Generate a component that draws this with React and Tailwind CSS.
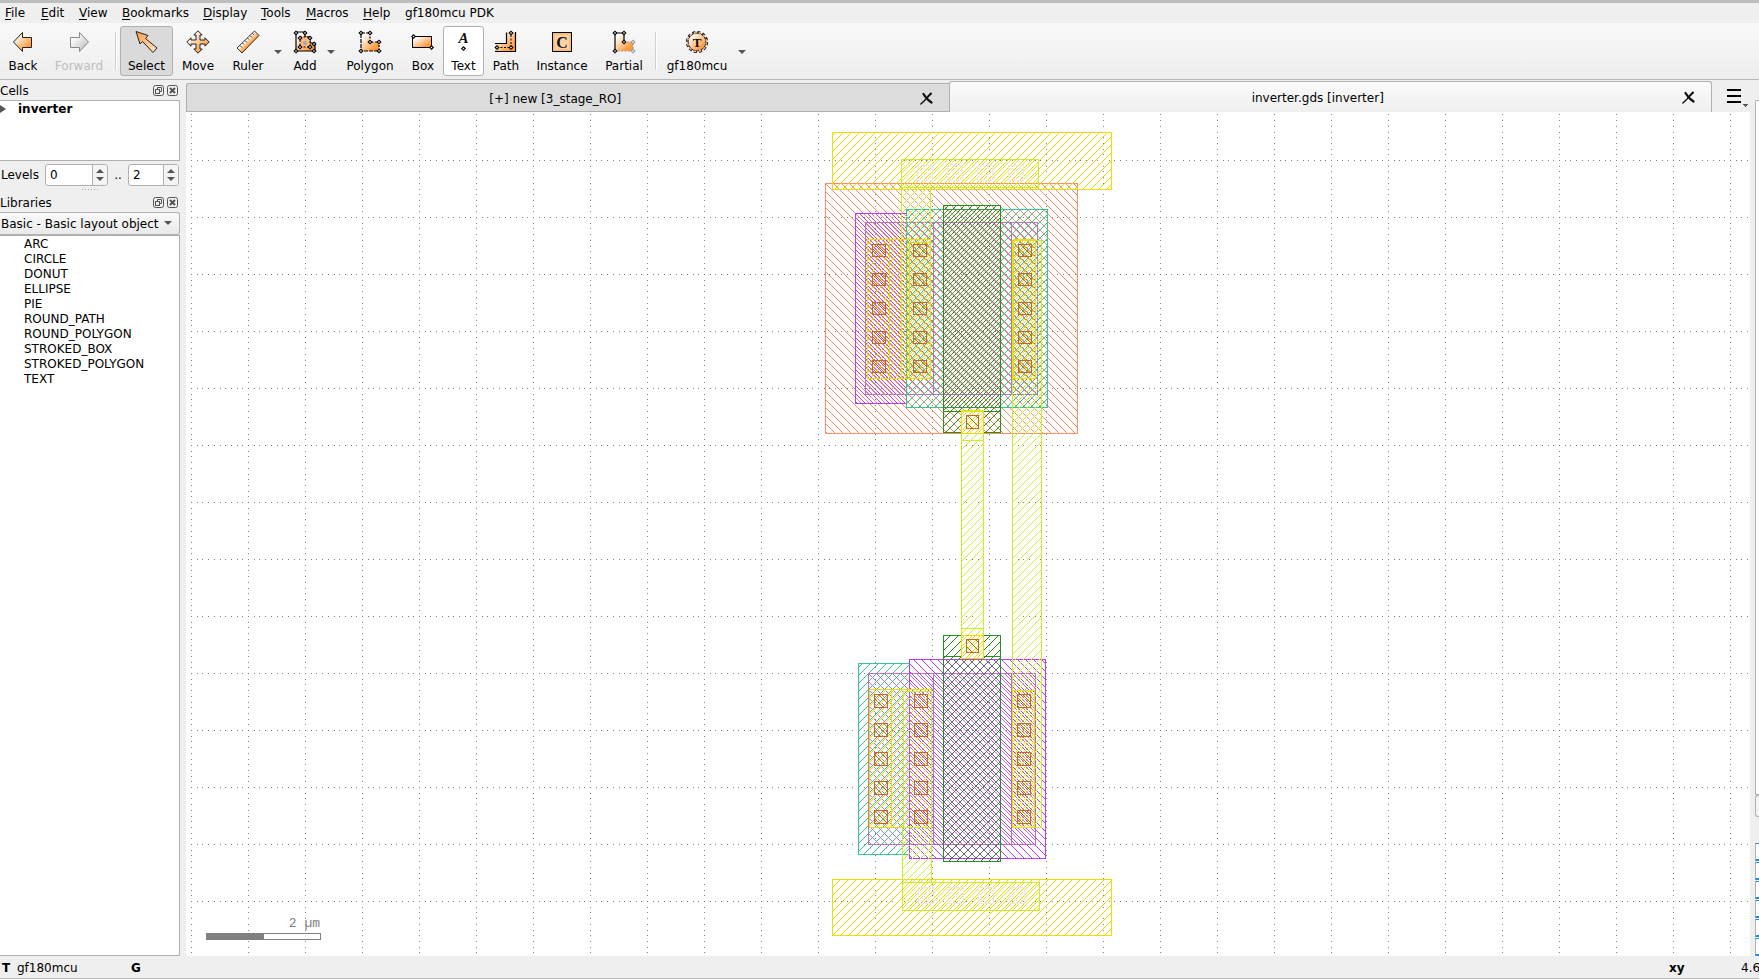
import React from "react";

const MENUS = [
  ["File", "w-9", true],
  ["Edit", "w-[38px]", true],
  ["View", "w-[43px]", true],
  ["Bookmarks", "w-[81px]", true],
  ["Display", "w-[58px]", true],
  ["Tools", "w-[45px]", true],
  ["Macros", "w-[57px]", true],
  ["Help", "w-[42px]", true],
  ["gf180mcu PDK", "w-[100px]", false],
];

const LIBRARY = [
  "ARC",
  "CIRCLE",
  "DONUT",
  "ELLIPSE",
  "PIE",
  "ROUND_PATH",
  "ROUND_POLYGON",
  "STROKED_BOX",
  "STROKED_POLYGON",
  "TEXT",
];

function Handle({ x, y, c = "#000" }) {
  return (
    <path
      d={`M${x} ${y - 2.6}L${x + 2.6} ${y}L${x} ${y + 2.6}L${x - 2.6} ${y}Z`}
      fill={c}
    />
  );
}

function Handles({ points, c = "#000" }) {
  return points.map(([x, y]) => (
    <g key={`${x}-${y}`}>
      <Handle x={x} y={y} c={c} />
      <rect x={x - 0.7} y={y - 0.7} width="1.4" height="1.4" fill="#fff" />
    </g>
  ));
}

const ICONS = {
  back: (
    <path d="M2.5 12L11.5 2.5V7.5H20.5V17.5H11.5V21.5Z" fill="url(#warm)" stroke="#222" />
  ),
  forward: (
    <path d="M21.5 12L12.5 2.5V7.5H3.5V17.5H12.5V21.5Z" fill="url(#cool)" stroke="#888" />
  ),
  select: (
    <path
      d="M1 1.5L13 5.5L10.5 8.5L22 18L18 22.5L7.5 11.5L5 14Z"
      fill="url(#peach)"
      stroke="#222"
    />
  ),
  move: (
    <path
      d="M12 .8L16.2 5H14V10H19V7.8L23.2 12L19 16.2V14H14V19H16.2L12 23.2L7.8 19H10V14H5V16.2L.8 12L5 7.8V10H10V5H7.8Z"
      fill="url(#warm)"
      stroke="#222"
    />
  ),
  ruler: (
    <g>
      <path d="M1 18L18.5 1L23 5.5L6 23Z" fill="url(#ruler)" stroke="#333" />
      <path
        d="M4 15.5l2 2M6.5 13l1.5 1.5M9 10.5l2 2M11.5 8l1.5 1.5M14 5.5l2 2M16.5 3.5l1.5 1.5"
        stroke="#333"
      />
    </g>
  ),
  add: (
    <g>
      <path d="M3 2H12V7H17V13H22V21H3Z" fill="url(#warm)" stroke="#000" strokeWidth="1.2" />
      <path d="M7 7H17V17H7Z" fill="#ffbb7c" stroke="#000" strokeDasharray="2 1.5" />
      <circle cx="12" cy="13" r="2.2" fill="#aaa" />
      <Handles points={[[3, 3], [12, 3], [3, 21], [21, 21], [21, 14], [7, 8], [17, 8], [7, 17], [17, 17]]} />
    </g>
  ),
  polygon: (
    <g>
      <path d="M3 3H12V12H21V21H3Z" fill="url(#warm)" />
      <path d="M12 3V12H21V21" fill="none" stroke="#000" strokeWidth="1.2" strokeDasharray="2 1.5" />
      <path d="M12 3H3V21H21" fill="none" stroke="#000" strokeWidth="1.2" strokeDasharray="4 1" />
      <Handles points={[[3, 3], [12, 3], [12, 12], [21, 12], [21, 21], [3, 21]]} />
    </g>
  ),
  box: (
    <g>
      <rect x="1.5" y="6.5" width="19" height="11" fill="url(#warm)" stroke="#000" />
      <Handles points={[[2.5, 6.5], [20.5, 17.5]]} />
    </g>
  ),
  text: (
    <g>
      <text x="11.5" y="13" textAnchor="middle" fontFamily="Liberation Serif, serif" fontSize="15" fontWeight="bold" fontStyle="italic" fill="#111">A</text>
      <Handles points={[[11.5, 18.5]]} />
    </g>
  ),
  path: (
    <g>
      <path d="M1 13.5H12.5V2.5H21.5V21.5H1Z" fill="url(#warm)" />
      <path d="M1 13.5H12.5V2.5M21.5 2V21.5H1" fill="none" stroke="#000" strokeWidth="1.2" />
      <path d="M3 17.5H17V3" fill="none" stroke="#000" strokeDasharray="2 1.5" />
      <Handles points={[[3, 17.5], [17, 17.5], [17, 3]]} />
    </g>
  ),
  instance: (
    <g>
      <rect x="2.5" y="2.5" width="19" height="19" fill="#ffbb7c" stroke="#000" />
      <rect x="5" y="5" width="14" height="14" fill="#ffd4a8" />
      <text x="12" y="17.5" textAnchor="middle" fontFamily="Liberation Serif, serif" fontSize="16" fontWeight="bold" fill="#111">C</text>
    </g>
  ),
  partial: (
    <g>
      <path d="M3 3H12V12H21V21H3Z" fill="url(#warm)" />
      <path d="M12 11V3H3V21" fill="none" stroke="#000" strokeWidth="1.2" />
      <path d="M12 12H21V21H3" fill="none" stroke="#999" strokeDasharray="2 1.5" />
      <Handles points={[[21, 12], [21, 21]]} c="#999" />
      <Handles points={[[3, 3], [12, 3], [3, 21], [12, 12]]} />
    </g>
  ),
  gear: (
    <g>
      <circle cx="12" cy="12" r="9.6" fill="none" stroke="#222" strokeWidth="3" strokeDasharray="3 2.03" />
      <circle cx="12" cy="12" r="8.9" fill="url(#warm)" stroke="#222" />
      <circle cx="12" cy="12" r="9.4" fill="none" stroke="#ffb877" strokeWidth="1.6" strokeDasharray="2 3.03" strokeDashoffset="-.5" />
      <text x="12" y="16.5" textAnchor="middle" fontFamily="Liberation Serif, serif" fontSize="13" fontWeight="bold" fill="#111">T</text>
    </g>
  ),
};

function Defs() {
  return (
    <svg className="absolute size-0" aria-hidden="true">
      <defs>
        <linearGradient id="warm" x1="0" y1="0" x2="1" y2="1">
          <stop offset=".15" stopColor="#fff" />
          <stop offset=".8" stopColor="#ff9a3c" />
        </linearGradient>
        <linearGradient id="peach" x1="0" y1="0" x2="1" y2="1">
          <stop offset="0" stopColor="#ff9a3c" />
          <stop offset="1" stopColor="#ffe6cf" />
        </linearGradient>
        <linearGradient id="cool" x1="0" y1="0" x2="1" y2="1">
          <stop offset=".2" stopColor="#fff" />
          <stop offset="1" stopColor="#b5b5b5" />
        </linearGradient>
        <linearGradient id="ruler" x1=".3" y1=".3" x2=".7" y2=".7">
          <stop offset=".3" stopColor="#fff" />
          <stop offset=".7" stopColor="#ff9a3c" />
        </linearGradient>
      </defs>
    </svg>
  );
}

function Caret({ className = "" }) {
  return (
    <svg className={`h-1 w-2 ${className}`} viewBox="0 0 8 4" aria-hidden="true">
      <path d="M0 0H8L4 4Z" fill="#555" />
    </svg>
  );
}

function ToolButton({ icon, label, width, look = "border-transparent", disabled }) {
  return (
    <button
      type="button"
      disabled={disabled}
      className={`flex h-[50px] shrink-0 flex-col items-center rounded-[3px] border pt-[3px] whitespace-nowrap disabled:text-[#bebebe] ${width} ${look}`}
    >
      <svg className="size-6 shrink-0" viewBox="0 0 24 24" aria-hidden="true">
        {ICONS[icon]}
      </svg>
      <span className="mt-1 leading-4">{label}</span>
    </button>
  );
}

function MenuArrow({ label, width }) {
  return (
    <button type="button" aria-label={label} className={`flex h-[50px] shrink-0 items-center justify-center pt-[2px] pr-[2px] ${width}`}>
      <Caret />
    </button>
  );
}

function Separator() {
  return (
    <div className="flex w-2 shrink-0 justify-center">
      <div className="h-[38px] w-[2px] border-r border-white bg-[#d0d0d0]" />
    </div>
  );
}

function Toolbar() {
  return (
    <div className="flex h-[57px] shrink-0 items-center border-b border-[#b8b8b8] bg-linear-to-b from-[#f9f9f9] to-[#ededed]">
      <ToolButton icon="back" label="Back" width="w-[46px]" />
      <ToolButton icon="forward" label="Forward" width="w-[66px]" disabled />
      <Separator />
      <ToolButton icon="select" label="Select" width="w-[53px]" look="border-[#b0b0b0] bg-[#dadada]" />
      <ToolButton icon="move" label="Move" width="w-[50px]" />
      <ToolButton icon="ruler" label="Ruler" width="w-[50px]" />
      <MenuArrow label="Ruler types" width="w-[11px]" />
      <ToolButton icon="add" label="Add" width="w-[42px]" />
      <MenuArrow label="Add modes" width="w-[11px]" />
      <ToolButton icon="polygon" label="Polygon" width="w-[66px]" />
      <ToolButton icon="box" label="Box" width="w-10" />
      <ToolButton icon="text" label="Text" width="w-[41px]" look="border-[#b0b0b0] bg-white" />
      <ToolButton icon="path" label="Path" width="w-11" />
      <ToolButton icon="instance" label="Instance" width="w-[68px]" />
      <ToolButton icon="partial" label="Partial" width="w-14" />
      <Separator />
      <ToolButton icon="gear" label="gf180mcu" width="w-[74px]" />
      <MenuArrow label="Technologies" width="w-[18px]" />
    </div>
  );
}

function DockHeader({ title }) {
  return (
    <div className="flex h-5 shrink-0 items-center gap-[3px] pr-[2px]">
      <h2 className="grow pt-[2px] leading-4">{title}</h2>
      <button type="button" aria-label={`Float ${title}`}>
        <svg className="size-[11px]" viewBox="0 0 11 11" fill="none" stroke="#555">
          <rect x=".5" y=".5" width="10" height="10" rx="2" />
          <path d="M4.5 4V2.5H8.5V6.5H7" />
          <rect x="2.5" y="4.5" width="4" height="4" />
        </svg>
      </button>
      <button type="button" aria-label={`Close ${title}`}>
        <svg className="size-[11px]" viewBox="0 0 11 11" fill="none" stroke="#555">
          <rect x=".5" y=".5" width="10" height="10" rx="2" />
          <path d="M3 3L8 8M8 3L3 8" strokeWidth="2" />
        </svg>
      </button>
    </div>
  );
}

function Spin({ label, value, width }) {
  return (
    <div className={`flex h-[22px] overflow-hidden rounded-[3px] border border-[#b0b0b0] bg-white ${width}`}>
      <input aria-label={label} defaultValue={value} className="w-0 min-w-0 grow bg-transparent pl-1 outline-none" />
      <div className="flex w-[15px] flex-col items-center justify-center gap-1 border-l border-[#b0b0b0] bg-[#f4f4f4] pr-px">
        <button type="button" aria-label={`${label} up`} className="flex">
          <Caret className="rotate-180" />
        </button>
        <button type="button" aria-label={`${label} down`} className="flex">
          <Caret />
        </button>
      </div>
    </div>
  );
}

function Sidebar() {
  return (
    <aside className="flex w-[180px] shrink-0 flex-col">
      <DockHeader title="Cells" />
      <div className="flex h-[61px] shrink-0 items-start border border-l-0 border-[#b0b0b0] bg-white">
        <button type="button" aria-label="Expand inverter" className="mt-1">
          <svg className="h-2 w-[6px]" viewBox="0 0 6 8">
            <path d="M0 0L6 4L0 8Z" fill="#555" />
          </svg>
        </button>
        <span className="ml-3 leading-4 font-bold">inverter</span>
      </div>
      <div className="flex h-[26px] shrink-0 items-center pt-px pl-px">
        <span className="w-11">Levels</span>
        <Spin label="Minimum level" value="0" width="w-[63px]" />
        <span className="w-5 text-center">..</span>
        <Spin label="Maximum level" value="2" width="w-[51px]" />
      </div>
      <div className="mx-auto mt-[2px] h-px w-[17px] bg-[repeating-linear-gradient(90deg,#aaa_0_1px,transparent_1px_3px)]" />
      <div className="h-[2px] shrink-0" />
      <DockHeader title="Libraries" />
      <div className="relative h-[23px] shrink-0">
        <select
          aria-label="Library"
          className="block h-full w-full appearance-none rounded-r-[3px] border border-l-0 border-[#b0b0b0] bg-linear-to-b from-[#fafafa] to-[#e9e9e9] pl-px"
        >
          <option>Basic - Basic layout object</option>
        </select>
        <Caret className="pointer-events-none absolute top-[9px] right-2" />
      </div>
      <ul className="grow border border-l-0 border-[#b0b0b0] bg-white pt-px">
        {LIBRARY.map((name) => (
          <li key={name} className="pl-6 leading-[15px]">
            {name}
          </li>
        ))}
      </ul>
    </aside>
  );
}

/* ---- layout view ---- */

const GRID = Array.from({ length: 10 }, (_, i) => Math.round(i * 5.7));

const COLORS = {
  yellow: "#f0dc00",
  lime: "#c8f028",
  orange: "#ff8c64",
  purple: "#b93cff",
  teal: "#32c896",
  pink: "#c070c0",
  green: "#23911e",
  gate: "#3c9650",
  contact: "#c8642d",
  via: "#f4e4f0",
};

// direction of the hatch lines and their phase within the 8 px tile
const HATCH = {
  yellow: ["/", 0],
  lime: ["/", 3],
  orange: ["\\", 2],
  purple: ["\\", 6],
  teal: ["/", 6],
  pink: ["\\", 3],
  green: ["/", 2],
  gate: ["/", 6],
  contact: ["\\", 0],
  via: ["\\", 4],
};

// [layer, left, top, right, bottom]
const SHAPES = [
  ["orange", 825, 183, 1077, 433],
  ["purple", 855, 213, 906, 403],
  ["pink", 865, 222, 1037, 394],
  ["pinkLine", 933, 222, 1011, 394],
  ["teal", 906, 209, 1047, 407],
  ["gate", 943, 209, 1000, 407],
  ["green", 943, 205, 1000, 411],
  ["green", 943, 411, 1000, 432],
  ["teal", 858, 663, 909, 854],
  ["pink", 868, 673, 1035, 844],
  ["pinkLine", 933, 673, 1011, 844],
  ["purple", 909, 659, 1045, 858],
  ["green", 943, 656, 1000, 861],
  ["green", 943, 635, 1000, 656],
  ["yellow", 832, 132, 1111, 189],
  ["yellow", 832, 879, 1111, 935],
  ["clear", 961, 411, 983, 433],
  ["clear", 961, 628, 983, 658],
  ["lime", 901, 159, 1038, 187],
  ["lime", 901, 187, 930, 378],
  ["yellow", 867, 239, 930, 378],
  ["yellowLine", 867, 239, 889, 378],
  ["yellowLine", 909, 242, 930, 378],
  ["yellowLine", 1013, 239, 1035, 378],
  ["lime", 1012, 240, 1041, 827],
  ["yellow", 1012, 240, 1035, 378],
  ["lime", 961, 410, 983, 658],
  ["limeLine", 961, 440, 983, 628],
  ["yellow", 961, 411, 983, 433],
  ["yellow", 961, 635, 983, 658],
  ["yellow", 869, 689, 931, 827],
  ["yellowLine", 869, 689, 891, 827],
  ["limeLine", 903, 691, 931, 827],
  ["yellow", 1012, 690, 1034, 827],
  ["lime", 902, 827, 931, 882],
  ["lime", 902, 882, 1039, 910],
  ["contact", 966, 415, 978, 428],
  ["contact", 966, 639, 978, 652],
];

for (const y of [244, 273, 302, 331, 360]) {
  for (const x of [872, 913, 1018]) SHAPES.push(["contact", x, y, x + 13, y + 12]);
}
for (const y of [694, 723, 752, 781, 810]) {
  for (const x of [874, 914, 1017]) SHAPES.push(["contact", x, y, x + 13, y + 13]);
}
for (const x of [917, 947, 977, 1008]) {
  SHAPES.push(["via", x, 165, x + 15, 180]);
  SHAPES.push(["via", x + 1, 887, x + 16, 903]);
}

function hatchPath([dir, phase]) {
  return Array.from({ length: 8 }, (_, i) => {
    const x = (dir === "/" ? 7 - i + phase : i + phase) % 8;
    return `M${x} ${i}h1v1h-1z`;
  }).join("");
}

function LayoutView() {
  return (
    <svg className="block min-h-0 w-full grow bg-white" shapeRendering="crispEdges" role="img" aria-label="Layout of cell inverter">
      <defs>
        <pattern id="grid" x="5" y="48" width="57" height="57" patternUnits="userSpaceOnUse">
          <path d={GRID.map((p) => `M${p} 0h1v1h-1zM0 ${p}h1v1h-1z`).join("")} fill="#808080" />
        </pattern>
        {Object.keys(COLORS).map((k) => (
          <pattern key={k} id={`hatch-${k}`} width="8" height="8" patternUnits="userSpaceOnUse">
            <path d={hatchPath(HATCH[k])} fill={COLORS[k]} />
          </pattern>
        ))}
      </defs>
      <rect width="100%" height="100%" fill="url(#grid)" />
      <g transform="translate(-186 -112)">
        {SHAPES.map(([layer, l, t, r, b], i) => {
          if (layer === "clear") {
            return <rect key={i} x={l} y={t} width={r - l} height={b - t} fill="#fff" />;
          }
          const outline = layer.endsWith("Line");
          const name = outline ? layer.slice(0, -4) : layer;
          return (
            <rect
              key={i}
              x={l + 0.5}
              y={t + 0.5}
              width={r - l}
              height={b - t}
              fill={outline ? "none" : `url(#hatch-${name})`}
              stroke={COLORS[name]}
            />
          );
        })}
        <rect x="206.5" y="933.5" width="114" height="6" fill="#fff" stroke="#808080" />
        <rect x="206" y="933" width="58" height="7" fill="#808080" />
        <text x="320" y="927" textAnchor="end" fontFamily="Liberation Mono, monospace" fontSize="13" fill="#808080">
          2 µm
        </text>
      </g>
    </svg>
  );
}

function CloseTab({ label }) {
  return (
    <button type="button" aria-label={label} className="mr-4 shrink-0">
      <svg className="size-[13px]" viewBox="0 0 13 13" fill="none" stroke="#111" strokeLinecap="round">
        <path d="M.8 12C4 9.5 7 6 10.8 1.5" strokeWidth="1.3" />
        <path d="M8 4.5L11 1.5" strokeWidth="1.8" />
        <path d="M3.5 2C5 4.5 8 8.5 11.5 10.5" strokeWidth="2.2" />
      </svg>
    </button>
  );
}

function Tabs() {
  return (
    <div className="flex h-8 shrink-0 items-end">
      <div className="flex h-[29px] min-w-0 flex-1 items-center rounded-tl-[3px] border border-r-0 border-[#b0b0b0] bg-[#dcdcdc] pt-[2px]">
        <button type="button" className="grow pl-1 text-center">
          [+] new [3_stage_RO]
        </button>
        <CloseTab label="Close new" />
      </div>
      <div className="flex h-[31px] min-w-0 flex-1 items-center rounded-t-[3px] border border-b-0 border-[#b0b0b0] bg-linear-to-b from-[#fafafa] to-[#efefef] pt-px">
        <button type="button" className="grow pl-1 text-center">
          inverter.gds [inverter]
        </button>
        <CloseTab label="Close inverter.gds" />
      </div>
      <button type="button" aria-label="View list" className="h-8 w-[38px] shrink-0 pl-[15px]">
        <svg className="h-[22px] w-[22px]" viewBox="0 0 22 22" shapeRendering="crispEdges">
          <path d="M0 4h14v2H0zM0 10h14v2H0zM0 16h14v2H0z" />
          <path d="M15 19h6l-3 3z" fill="#555" />
        </svg>
      </button>
    </div>
  );
}

function LayerEdge() {
  return (
    <div className="flex w-1 shrink-0 flex-col overflow-hidden pt-5" aria-hidden="true">
      <div className="grow rounded-tl-[2px] border border-r-0 border-[#b0b0b0] bg-white" />
      <div className="h-[22px] shrink-0 rounded-l-[3px] border border-r-0 border-[#b0b0b0] bg-[#f4f4f4]" />
      <div className="mt-[26px] flex shrink-0 flex-col gap-px">
        {[0, 1, 2, 3, 4, 5].map((i) => (
          <div key={i} className="h-[18px] w-1 shrink-0 border-t border-b-2 border-l border-[#308cc6] border-l-[#b0b0b0] bg-white" />
        ))}
      </div>
    </div>
  );
}

export default function App() {
  return (
    <div className="flex h-screen flex-col overflow-hidden bg-[#efefef] font-['DejaVu_Sans',sans-serif] text-xs text-black">
      <Defs />
      <nav className="flex h-5 shrink-0 box-content items-center border-t-3 border-[#bebebe] pl-[5px]">
        {MENUS.map(([name, width, key]) => (
          <button key={name} type="button" className={`shrink-0 text-left whitespace-nowrap leading-4 ${width}`}>
            {key ? <span className="underline underline-offset-2">{name[0]}</span> : name[0]}
            {name.slice(1)}
          </button>
        ))}
      </nav>
      <Toolbar />
      <main className="flex min-h-0 grow">
        <Sidebar />
        <div className="w-[6px] shrink-0" />
        <section className="flex min-w-0 grow flex-col">
          <Tabs />
          <LayoutView />
        </section>
        <div className="w-[5px] shrink-0" />
        <LayerEdge />
      </main>
      <footer className="flex h-[23px] shrink-0 items-center overflow-hidden border-b border-[#b8b8b8] pt-[2px] pl-[2px] whitespace-nowrap">
        <b className="w-[15px]">T</b>
        <span className="w-[114px]">gf180mcu</span>
        <b>G</b>
        <b className="ml-auto w-[72px] shrink-0">xy</b>
        <span className="w-[18px] shrink-0">4.6</span>
      </footer>
    </div>
  );
}
